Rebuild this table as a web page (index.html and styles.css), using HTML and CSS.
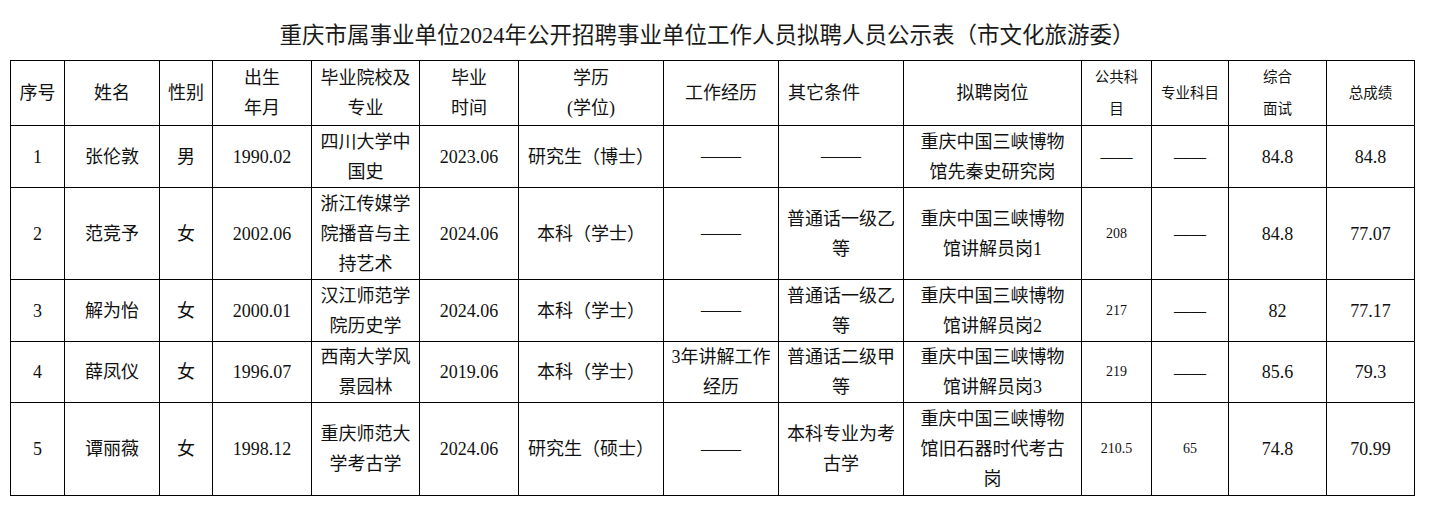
FILE: index.html
```html
<!DOCTYPE html>
<html lang="zh-CN">
<head>
<meta charset="utf-8">
<title>公示表</title>
<link rel="stylesheet" href="styles.css">
</head>
<body>
<div class="page">
  <h1 class="title">重庆市属事业单位2024年公开招聘事业单位工作人员拟聘人员公示表（市文化旅游委）</h1>
  <table class="grid">
    <colgroup>
      <col class="c1"><col class="c2"><col class="c3"><col class="c4"><col class="c5"><col class="c6"><col class="c7">
      <col class="c8"><col class="c9"><col class="c10"><col class="c11"><col class="c12"><col class="c13"><col class="c14">
    </colgroup>
    <thead>
      <tr class="rh">
        <th>序号</th>
        <th>姓名</th>
        <th>性别</th>
        <th>出生<br>年月</th>
        <th>毕业院校及<br>专业</th>
        <th>毕业<br>时间</th>
        <th>学历<br>(学位)</th>
        <th>工作经历</th>
        <th class="left">其它条件</th>
        <th>拟聘岗位</th>
        <th class="sm">公共科<br>目</th>
        <th class="sm">专业科目</th>
        <th class="sm">综合<br>面试</th>
        <th class="sm">总成绩</th>
      </tr>
    </thead>
    <tbody>
      <tr class="r2l">
        <td>1</td><td>张伦敦</td><td>男</td><td>1990.02</td><td>四川大学中国史</td><td>2023.06</td>
        <td>研究生（博士）</td><td><span class="dash">——</span></td><td><span class="dash">——</span></td>
        <td>重庆中国三峡博物馆先秦史研究岗</td><td><span class="dash sd">——</span></td><td><span class="dash sd">——</span></td>
        <td>84.8</td><td>84.8</td>
      </tr>
      <tr class="r3l">
        <td>2</td><td>范竞予</td><td>女</td><td>2002.06</td><td>浙江传媒学院播音与主持艺术</td><td>2024.06</td>
        <td>本科（学士）</td><td><span class="dash">——</span></td><td>普通话一级乙等</td>
        <td>重庆中国三峡博物馆讲解员岗1</td><td class="sn">208</td><td><span class="dash sd">——</span></td>
        <td>84.8</td><td>77.07</td>
      </tr>
      <tr class="r2l">
        <td>3</td><td>解为怡</td><td>女</td><td>2000.01</td><td>汉江师范学院历史学</td><td>2024.06</td>
        <td>本科（学士）</td><td><span class="dash">——</span></td><td>普通话一级乙等</td>
        <td>重庆中国三峡博物馆讲解员岗2</td><td class="sn">217</td><td><span class="dash sd">——</span></td>
        <td>82</td><td>77.17</td>
      </tr>
      <tr class="r2m">
        <td>4</td><td>薛凤仪</td><td>女</td><td>1996.07</td><td>西南大学风景园林</td><td>2019.06</td>
        <td>本科（学士）</td><td>3年讲解工作经历</td><td>普通话二级甲等</td>
        <td>重庆中国三峡博物馆讲解员岗3</td><td class="sn">219</td><td><span class="dash sd">——</span></td>
        <td>85.6</td><td>79.3</td>
      </tr>
      <tr class="r3l">
        <td>5</td><td>谭丽薇</td><td>女</td><td>1998.12</td><td>重庆师范大学考古学</td><td>2024.06</td>
        <td>研究生（硕士）</td><td><span class="dash">——</span></td><td>本科专业为考古学</td>
        <td>重庆中国三峡博物馆旧石器时代考古岗</td><td class="sn">210.5</td><td class="sn">65</td>
        <td>74.8</td><td>70.99</td>
      </tr>
    </tbody>
  </table>
</div>
</body>
</html>
```
FILE: styles.css
```css
html, body {
  margin: 0;
  padding: 0;
  background: #ffffff;
}

.page {
  padding: 0 0 0 10px;
  width: 1404px;
  font-family: "Liberation Serif", "Noto Sans CJK SC", serif;
  color: #111;
}

.title {
  margin: 0;
  padding-top: 21px;
  padding-right: 10px;
  height: 30px;
  line-height: 30px;
  margin-bottom: 9px;
  font-size: 22.5px;
  font-weight: 400;
  text-align: center;
  color: #1a1a1a;
  white-space: nowrap;
}

.grid {
  table-layout: fixed;
  border-collapse: collapse;
  width: 1404px;
}

.grid th,
.grid td {
  border: 1px solid #000;
  padding: 0 8px;
  font-size: 18px;
  font-weight: 400;
  line-height: 30px;
  text-align: center;
  vertical-align: middle;
  word-break: break-all;
}

.grid th.left {
  text-align: left;
  padding-left: 9px;
}

.grid th.sm {
  font-size: 14.5px;
  line-height: 32px;
  padding: 0 4px;
}

.grid td.sn {
  font-size: 14px;
}

.dash {
  font-family: "Liberation Serif", serif;
  font-size: 20px;
  letter-spacing: 0;
}

.dash.sd {
  font-size: 16px;
}

.c1 { width: 54px; }
.c2 { width: 95px; }
.c3 { width: 53px; }
.c4 { width: 99px; }
.c5 { width: 108px; }
.c6 { width: 99px; }
.c7 { width: 145px; }
.c8 { width: 115px; }
.c9 { width: 125px; }
.c10 { width: 178px; }
.c11 { width: 70px; }
.c12 { width: 77px; }
.c13 { width: 98px; }
.c14 { width: 88px; }

.grid td:nth-child(8) { padding: 0 5px; }
.grid td:nth-child(10) { padding: 0 16px; }

.rh { height: 65px; }
.r2l { height: 62px; }
.r2m { height: 61px; }
.r3l { height: 92px; }
.grid tbody tr:last-child { height: 93px; }
```
